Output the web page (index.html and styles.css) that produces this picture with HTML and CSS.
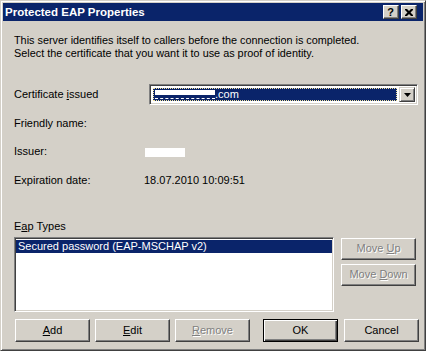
FILE: index.html
```html
<!DOCTYPE html>
<html>
<head>
<meta charset="utf-8">
<link rel="stylesheet" href="styles.css">
</head>
<body>
<div class="window">
  <div class="titlebar">
    <span class="title">Protected EAP Properties</span>
    <div class="caption-btns">
      <span class="cbtn help">?</span>
      <span class="cbtn close"><svg width="8" height="7" viewBox="0 0 8 7"><path d="M0 0h2l2 2 2-2h2v1l-2.5 2.5L8 6v1H6L4 5 2 7H0V6l2.5-2.5L0 1z" fill="#000"/></svg></span>
    </div>
  </div>
  <div class="content">
    <p class="intro">This server identifies itself to callers before the connection is completed.<br>Select the certificate that you want it to use as proof of identity.</p>
    <div class="form">
      <span class="lbl">Certificate <u>i</u>ssued</span>
      <div class="combo">
        <div class="combo-field"><span class="redact-sel"></span><span>.com</span></div>
        <span class="combo-btn"><svg width="7" height="4" viewBox="0 0 7 4"><path d="M0 0h7L3.5 4z" fill="#000"/></svg></span>
      </div>
      <span class="lbl">Friendly name:</span>
      <span class="val"></span>
      <span class="lbl">Issuer:</span>
      <span class="val"><span class="redact"></span></span>
      <span class="lbl">Expiration date:</span>
      <span class="val">18.07.2010 10:09:51</span>
    </div>
    <div class="eap">
      <span class="lbl">E<u>a</u>p Types</span>
      <div class="eap-body">
        <div class="listbox">
          <div class="item selected">Secured password (EAP-MSCHAP v2)</div>
        </div>
        <div class="side-btns">
          <button class="btn side disabled">Move <u>U</u>p</button>
          <button class="btn side disabled">Move <u>D</u>own</button>
        </div>
      </div>
    </div>
    <div class="footer">
      <div class="group left">
        <button class="btn"><u>A</u>dd</button>
        <button class="btn"><u>E</u>dit</button>
        <button class="btn disabled"><u>R</u>emove</button>
      </div>
      <div class="group right">
        <button class="btn default">OK</button>
        <button class="btn">Cancel</button>
      </div>
    </div>
  </div>
</div>
</body>
</html>
```

FILE: styles.css
```css
* { box-sizing: border-box; }
html, body { margin: 0; padding: 0; }
body {
  width: 426px;
  height: 351px;
  overflow: hidden;
  background: #d4d0c8;
  font-family: "Liberation Sans", Arial, sans-serif;
  font-size: 11px;
  color: #000;
}
.window {
  width: 426px;
  height: 351px;
  background: #d4d0c8;
  border: 1px solid;
  border-color: #d4d0c8 #404040 #404040 #d4d0c8;
  box-shadow: inset 1px 1px #fff, inset -1px -1px #808080;
  padding: 2px;
  display: flex;
  flex-direction: column;
}
.titlebar {
  height: 18px;
  flex: none;
  background: #0a246a;
  display: flex;
  align-items: center;
  justify-content: space-between;
  padding: 0 6px 0 2px;
}
.title {
  color: #fff;
  font-weight: bold;
  font-size: 11.5px;
  line-height: 18px;
}
.caption-btns { display: flex; gap: 2px; }
.cbtn {
  width: 16px;
  height: 14px;
  background: #d4d0c8;
  border: 1px solid;
  border-color: #fff #404040 #404040 #fff;
  box-shadow: inset -1px -1px #808080;
  display: flex;
  align-items: center;
  justify-content: center;
}
.help {
  font-weight: bold;
  font-size: 11px;
  line-height: 12px;
  padding-right: 1px;
}
.close svg { display: block; margin-right: 1px; }
.content {
  flex: 1;
  display: flex;
  flex-direction: column;
  padding: 13px 4px 6px 11px;
}
.intro {
  margin: 0;
  line-height: 13px;
  font-size: 10.85px;
}
.form {
  margin-top: 24px;
  display: grid;
  grid-template-columns: 130px 1fr;
  grid-auto-rows: 21px;
  row-gap: 7.5px;
  align-items: center;
}
.lbl { line-height: 13px; }
.combo {
  margin: 0 1px 0 5px;
  height: 21px;
  background: #fff;
  border: 1px solid;
  border-color: #808080 #fff #fff #808080;
  box-shadow: inset 1px 1px #404040, inset -1px -1px #d4d0c8;
  padding: 2px;
  display: flex;
}
.combo-field {
  flex: 1;
  margin: 1px 2px 1px 1px;
  background: #0a246a;
  border: 1px dotted #f3e39a;
  color: #fff;
  display: flex;
  align-items: center;
  line-height: 13px;
}
.redact-sel {
  width: 60px;
  height: 9px;
  margin-left: 1px;
  margin-top: -1px;
  border-top: 5px solid #fff;
  border-bottom: 1px dashed #fff;
}
.combo-btn {
  width: 16px;
  height: 15px;
  background: #d4d0c8;
  border: 1px solid;
  border-color: #d4d0c8 #404040 #404040 #d4d0c8;
  box-shadow: inset 1px 1px #fff, inset -1px -1px #808080;
  display: flex;
  align-items: center;
  justify-content: center;
  flex: none;
}
.combo-btn svg { display: block; margin-top: 1px; }
.val { line-height: 13px; }
.redact {
  display: inline-block;
  width: 40px;
  height: 9px;
  background: #fff;
  vertical-align: middle;
  margin-left: 1px;
}
.eap {
  margin-top: 29px;
  display: flex;
  flex-direction: column;
}
.eap-body {
  margin-top: 4px;
  display: flex;
  align-items: flex-start;
}
.listbox {
  width: 320px;
  height: 75px;
  background: #fff;
  border: 1px solid;
  border-color: #808080 #fff #fff #808080;
  box-shadow: inset 1px 1px #404040, inset -1px -1px #d4d0c8;
  padding: 1px;
}
.item {
  height: 13px;
  line-height: 13px;
  padding-left: 2px;
  margin-top: 1px;
}
.item.selected { background: #0a246a; color: #fff; }
.side-btns {
  margin: 1px 3px 0 auto;
  display: flex;
  flex-direction: column;
  gap: 4px;
}
.btn {
  width: 75px;
  height: 23px;
  padding: 0;
  margin: 0;
  background: #d4d0c8;
  border: 1px solid;
  border-color: #fff #404040 #404040 #fff;
  box-shadow: inset -1px -1px #808080;
  font-family: inherit;
  font-size: 11px;
  color: #000;
  line-height: 13px;
}
.btn.side { height: 22px; }
.btn.disabled {
  color: #808080;
  text-shadow: 1px 1px 0 #fff;
}
.btn.default {
  border-color: #000;
  box-shadow: inset 1px 1px #fff, inset -1px -1px #404040, inset -2px -2px #808080;
}
.footer {
  margin-top: auto;
  display: flex;
  padding-left: 1px;
}
.group { display: flex; }
.group.left { gap: 5px; }
.group.right { gap: 6px; margin-left: 13px; }
```
